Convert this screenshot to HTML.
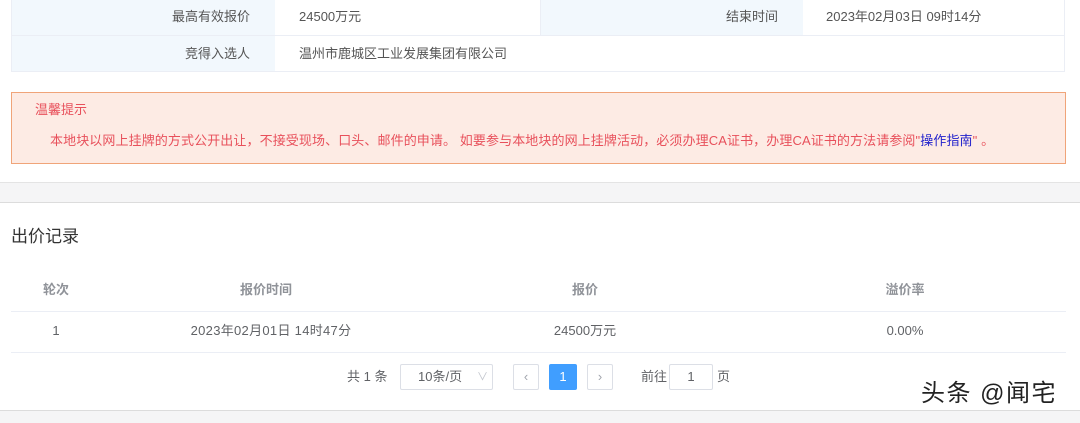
<!DOCTYPE html>
<html><head><meta charset="utf-8"><style>
*{margin:0;padding:0;box-sizing:border-box}
body{width:1080px;height:423px;overflow:hidden;background:#fff;font-family:"Liberation Sans","Noto Sans CJK SC",sans-serif;font-size:13px;line-height:16px;color:#606266;position:relative}
.a{position:absolute;white-space:nowrap}
.c{position:absolute;transform:translateX(-50%);white-space:nowrap}
.box{position:absolute;border:1px solid #dcdfe6;background:#fff;border-radius:2px}
</style></head><body>
<div class="a" style="left:11px;top:0;width:1054px;height:72px;border:1px solid #ebeef5;border-top:none"></div>
<div class="a" style="left:12px;top:0;width:263px;height:71px;background:#f2f8fd"></div>
<div class="a" style="left:540px;top:0;width:263px;height:35px;background:#f2f8fd"></div>
<div class="a" style="left:12px;top:35px;width:1053px;height:1px;background:#ebeef5"></div>
<div class="a" style="left:540px;top:0;width:1px;height:35px;background:#ebeef5"></div>
<div class="a" style="left:172px;top:9px;color:#555">最高有效报价</div>
<div class="a" style="left:299px;top:9px;color:#555">24500万元</div>
<div class="a" style="left:726px;top:9px;color:#555">结束时间</div>
<div class="a" style="left:826px;top:9px;color:#555">2023年02月03日 09时14分</div>
<div class="a" style="left:185px;top:46px;color:#555">竞得入选人</div>
<div class="a" style="left:299px;top:46px;color:#555">温州市鹿城区工业发展集团有限公司</div>
<div class="a" style="left:11px;top:92px;width:1055px;height:72px;background:#fdebe4;border:1px solid #f0a479"></div>
<div class="a" style="left:35px;top:102px;color:#e8505b">温馨提示</div>
<div class="a" style="left:50px;top:133px;color:#e8505b;letter-spacing:0.1px">本地块以网上挂牌的方式公开出让，不接受现场、口头、邮件的申请。 如要参与本地块的网上挂牌活动，必须办理CA证书，办理CA证书的方法请参阅"<span style="color:#2222cc">操作指南</span>" 。</div>
<div class="a" style="left:0;top:182px;width:1080px;height:21px;background:#f5f5f6;border-top:1px solid #e4e4e4;border-bottom:1px solid #dcdcdc"></div>
<div class="a" style="left:11px;top:227px;font-size:17px;line-height:20px;color:#333">出价记录</div>
<div class="c" style="left:56px;top:282px;color:#909399;font-weight:bold">轮次</div>
<div class="c" style="left:266px;top:282px;color:#909399;font-weight:bold">报价时间</div>
<div class="c" style="left:585px;top:282px;color:#909399;font-weight:bold">报价</div>
<div class="c" style="left:905px;top:282px;color:#909399;font-weight:bold">溢价率</div>
<div class="a" style="left:11px;top:311px;width:1055px;height:1px;background:#ebeef5"></div>
<div class="c" style="left:56px;top:323px">1</div>
<div class="c" style="left:271px;top:323px;letter-spacing:0.3px">2023年02月01日 14时47分</div>
<div class="c" style="left:585px;top:323px">24500万元</div>
<div class="c" style="left:905px;top:323px">0.00%</div>
<div class="a" style="left:11px;top:352px;width:1055px;height:1px;background:#ebeef5"></div>
<div class="a" style="left:347px;top:369px">共 1 条</div>
<div class="box" style="left:400px;top:364px;width:93px;height:26px"></div>
<div class="a" style="left:418px;top:369px">10条/页</div>
<div class="a" style="left:477px;top:369px;color:#c0c4cc;font-size:11px">∨</div>
<div class="box" style="left:513px;top:364px;width:26px;height:26px;color:#a0a4ac;text-align:center;line-height:23px">‹</div>
<div class="a" style="left:549px;top:364px;width:28px;height:26px;background:#409eff;color:#fff;text-align:center;line-height:26px;border-radius:2px">1</div>
<div class="box" style="left:587px;top:364px;width:26px;height:26px;color:#a0a4ac;text-align:center;line-height:23px">›</div>
<div class="a" style="left:641px;top:369px">前往</div>
<div class="box" style="left:669px;top:364px;width:44px;height:26px;text-align:center;line-height:24px">1</div>
<div class="a" style="left:717px;top:369px">页</div>
<div class="a" style="left:0;top:410px;width:1080px;height:13px;background:#f5f5f6;border-top:1px solid #dcdcdc"></div>
<div class="a" style="left:921px;top:380px;font-size:24px;line-height:28px;color:#222;letter-spacing:1.5px">头条 @闻宅</div>
</body></html>
